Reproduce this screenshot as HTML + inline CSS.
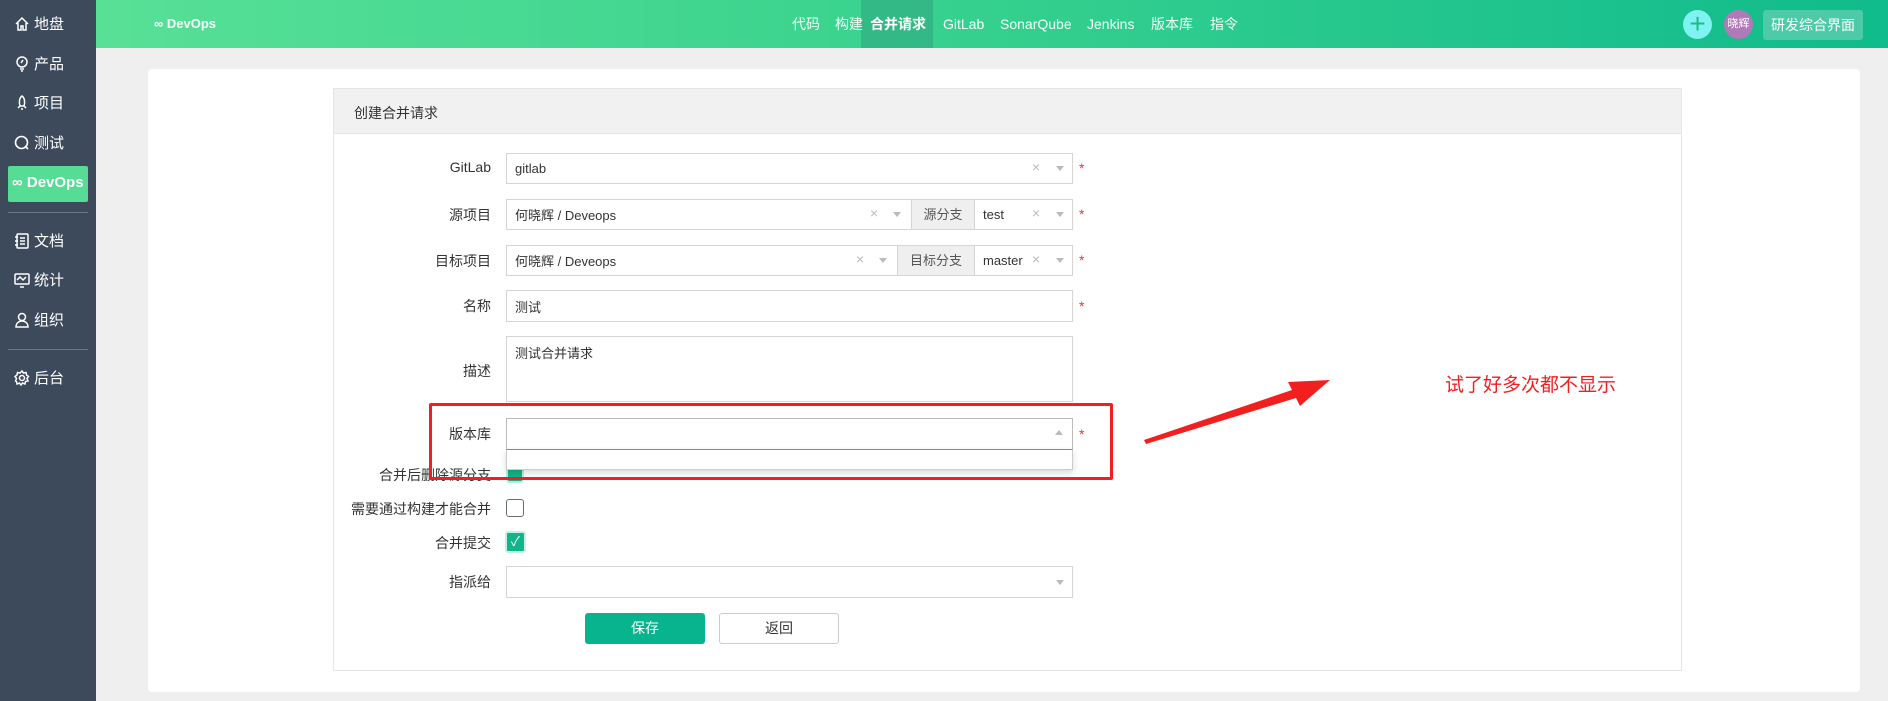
<!DOCTYPE html>
<html><head><meta charset="utf-8"><style>
*{box-sizing:border-box;margin:0;padding:0}
body{width:1888px;height:701px;overflow:hidden;background:#efefef;font-family:"Liberation Sans","Noto Sans CJK SC",sans-serif;font-size:14px;color:#333;position:relative}
.abs{position:absolute}
#side{left:0;top:0;width:96px;height:701px;background:#3c4a5c}
.si{position:absolute;left:14px;color:#fff;font-size:15px;display:flex;align-items:center;gap:4px}
.si svg{width:16px;height:16px}
.div{position:absolute;left:8px;width:80px;height:1px;background:#6b7787}
#top{left:96px;top:0;width:1792px;height:48px;background:linear-gradient(90deg,#58e096,#3cd48f 40%,#10bb8c)}
.nav{position:absolute;top:0;height:48px;line-height:48px;color:#f2fff8;font-size:14px}
.lbl{position:absolute;width:150px;text-align:right;font-size:14px;color:#333}
.inp{position:absolute;border:1px solid #d5d5d5;background:#fff;font-size:13px;padding-left:8px;display:flex;align-items:center;color:#333}
.star{position:absolute;color:#e33;font-size:14px}
.x{position:absolute;color:#bbb;font-size:14px}
.car{position:absolute;width:0;height:0;border-left:4px solid transparent;border-right:4px solid transparent;border-top:5px solid #bbb}
.addon{position:absolute;background:#efefef;border:1px solid #d5d5d5;color:#555;text-align:center;font-size:13px}
.cb{position:absolute;width:18px;height:18px;border-radius:3px}
</style></head><body>
<div id="side" class="abs">
<div class="si" style="top:13px"><svg viewBox="0 0 16 16" fill="none" stroke="#fff" stroke-width="1.5"><path d="M2 8L8 2l6 6M4 7v7h3v-4h2v4h3V7"/></svg>地盘</div>
<div class="si" style="top:53px"><svg viewBox="0 0 16 16" fill="none" stroke="#fff" stroke-width="1.5"><circle cx="8" cy="6" r="5"/><path d="M6 13h4M7 15h2M9 4l-2 3"/></svg>产品</div>
<div class="si" style="top:92px"><svg viewBox="0 0 16 16" fill="none" stroke="#fff" stroke-width="1.5"><path d="M8 1c3 2 3 7 2 10H6C5 8 5 3 8 1zM6 11l-2 2M10 11l2 2M7 14h2"/></svg>项目</div>
<div class="si" style="top:132px"><svg viewBox="0 0 16 16" fill="none" stroke="#fff" stroke-width="1.6"><circle cx="7.5" cy="7.5" r="6"/><path d="M11 11l3 3"/></svg>测试</div>
<div class="abs" style="left:8px;top:166px;width:80px;height:36px;background:#55dc95;border-radius:2px"></div>
<div class="si" style="left:12px;top:174px;font-weight:bold">∞ DevOps</div>
<div class="div" style="top:212px"></div>
<div class="si" style="top:230px"><svg viewBox="0 0 16 16" fill="none" stroke="#fff" stroke-width="1.5"><rect x="3" y="1" width="11" height="14" rx="1"/><path d="M6 5h5M6 8h5M6 11h5M1 4h3M1 8h3M1 12h3"/></svg>文档</div>
<div class="si" style="top:269px"><svg viewBox="0 0 16 16" fill="none" stroke="#fff" stroke-width="1.5"><rect x="1" y="2" width="14" height="10" rx="1"/><path d="M3 8l3-3 3 3 3-3M6 15h4"/></svg>统计</div>
<div class="si" style="top:309px"><svg viewBox="0 0 16 16" fill="none" stroke="#fff" stroke-width="1.5"><circle cx="8" cy="5" r="3.5"/><path d="M2 15c0-4 3-6 6-6s6 2 6 6z"/></svg>组织</div>
<div class="div" style="top:349px"></div>
<div class="si" style="top:367px"><svg viewBox="0 0 16 16" fill="none" stroke="#fff" stroke-width="1.5"><circle cx="8" cy="8" r="2.5"/><path d="M8 1l1.5 2 2.5-.5.5 2.5 2 1.5-1.5 2 1 2.5-2.5.5-.5 2.5-2.5-1-1.5 2-1.5-2-2.5 1-.5-2.5L1.5 11l1-2.5L1 6.5l2-1.5.5-2.5 2.5.5z"/></svg>后台</div>
</div>
<div id="top" class="abs">
<div class="nav" style="left:58px;font-size:13px;font-weight:bold">∞ DevOps</div>
<div class="abs" style="left:765px;top:0;width:72px;height:48px;background:#33b985"></div>
<div class="nav" style="left:696px">代码</div>
<div class="nav" style="left:739px">构建</div>
<div class="nav" style="left:774px;color:#fff;font-weight:bold">合并请求</div>
<div class="nav" style="left:847px">GitLab</div>
<div class="nav" style="left:904px">SonarQube</div>
<div class="nav" style="left:991px">Jenkins</div>
<div class="nav" style="left:1055px">版本库</div>
<div class="nav" style="left:1114px">指令</div>
<div class="abs" style="left:1587px;top:10px;width:29px;height:29px;border-radius:50%;background:#7ff2f2;color:#1fb98a;font-size:28px;line-height:27px;text-align:center">+</div>
<div class="abs" style="left:1628px;top:10px;width:29px;height:29px;border-radius:50%;background:#b07ab8;color:#fff;font-size:11px;line-height:29px;text-align:center">晓辉</div>
<div class="abs" style="left:1667px;top:10px;width:100px;height:30px;border-radius:3px;background:#4dcaa8;color:#fff;font-size:14px;line-height:30px;text-align:center">研发综合界面</div>
</div>
<div class="abs" style="left:148px;top:69px;width:1712px;height:623px;background:#fff;border-radius:4px"></div>
<div class="abs" style="left:333px;top:88px;width:1349px;height:583px;border:1px solid #e5e5e5;background:#fff"></div>
<div class="abs" style="left:334px;top:89px;width:1347px;height:45px;background:#f1f1f1;border-bottom:1px solid #e5e5e5"></div>
<div class="abs" style="left:354px;top:103px;font-size:14px;color:#333">创建合并请求</div>

<div class="lbl" style="left:341px;top:159px">GitLab</div>
<div class="inp" style="left:506px;top:153px;width:567px;height:31px">gitlab</div>
<div class="x" style="left:1032px;top:159px">×</div><div class="car" style="left:1056px;top:166px"></div>
<div class="star" style="left:1079px;top:160px">*</div>

<div class="lbl" style="left:341px;top:205px">源项目</div>
<div class="inp" style="left:506px;top:199px;width:406px;height:31px">何晓辉 / Deveops</div>
<div class="x" style="left:870px;top:205px">×</div><div class="car" style="left:893px;top:212px"></div>
<div class="addon" style="left:911px;top:199px;width:64px;height:31px;line-height:29px">源分支</div>
<div class="inp" style="left:974px;top:199px;width:99px;height:31px">test</div>
<div class="x" style="left:1032px;top:205px">×</div><div class="car" style="left:1056px;top:212px"></div>
<div class="star" style="left:1079px;top:206px">*</div>

<div class="lbl" style="left:341px;top:251px">目标项目</div>
<div class="inp" style="left:506px;top:245px;width:392px;height:31px">何晓辉 / Deveops</div>
<div class="x" style="left:856px;top:251px">×</div><div class="car" style="left:879px;top:258px"></div>
<div class="addon" style="left:897px;top:245px;width:78px;height:31px;line-height:29px">目标分支</div>
<div class="inp" style="left:974px;top:245px;width:99px;height:31px">master</div>
<div class="x" style="left:1032px;top:251px">×</div><div class="car" style="left:1056px;top:258px"></div>
<div class="star" style="left:1079px;top:252px">*</div>

<div class="lbl" style="left:341px;top:296px">名称</div>
<div class="inp" style="left:506px;top:290px;width:567px;height:32px">测试</div>
<div class="star" style="left:1079px;top:298px">*</div>

<div class="lbl" style="left:341px;top:361px">描述</div>
<div class="inp" style="left:506px;top:336px;width:567px;height:66px;align-items:flex-start;padding-top:6px">测试合并请求</div>

<div class="lbl" style="left:341px;top:424px">版本库</div>
<div class="inp" style="left:506px;top:418px;width:567px;height:32px;border-color:#bbb"></div>
<div class="abs" style="left:1055px;top:430px;border-left:4px solid transparent;border-right:4px solid transparent;border-bottom:5px solid #bbb"></div>
<div class="star" style="left:1079px;top:426px">*</div>

<div class="lbl" style="left:341px;top:465px">合并后删除源分支</div>
<div class="cb" style="left:506px;top:465px;background:#10b58a;border:2px solid #bdeedd"></div>
<div class="abs" style="left:506px;top:449px;width:567px;height:21px;background:#fff;border:1px solid #ccc;border-top:1px solid #888;box-shadow:0 3px 6px rgba(0,0,0,.15)"></div>

<div class="lbl" style="left:341px;top:499px">需要通过构建才能合并</div>
<div class="cb" style="left:506px;top:499px;border:1px solid #666d7a;background:#fff"></div>

<div class="lbl" style="left:341px;top:533px">合并提交</div>
<div class="cb" style="left:505px;top:531px;width:21px;height:22px;background:#10b58a;border:2px solid #c7efe3;color:#fff;font-size:13px;line-height:18px;text-align:center">✓</div>

<div class="lbl" style="left:341px;top:572px">指派给</div>
<div class="inp" style="left:506px;top:566px;width:567px;height:32px"></div>
<div class="car" style="left:1056px;top:580px"></div>

<div class="abs" style="left:585px;top:613px;width:120px;height:31px;background:#07b48e;border-radius:3px;color:#fff;text-align:center;line-height:31px">保存</div>
<div class="abs" style="left:719px;top:613px;width:120px;height:31px;background:#fff;border:1px solid #ccc;border-radius:3px;color:#333;text-align:center;line-height:29px">返回</div>

<div class="abs" style="left:429px;top:403px;width:684px;height:77px;border:3px solid #f21f1f;border-radius:2px"></div>
<svg class="abs" style="left:1130px;top:370px" width="220" height="80" viewBox="0 0 220 80"><polygon points="14,70 162,20 158,12 200,10 170,36 166,28 16,74" fill="#f21f1f"/></svg>
<div class="abs" style="left:1445px;top:370px;color:#f21f1f;font-size:19px">试了好多次都不显示</div>
</body></html>
